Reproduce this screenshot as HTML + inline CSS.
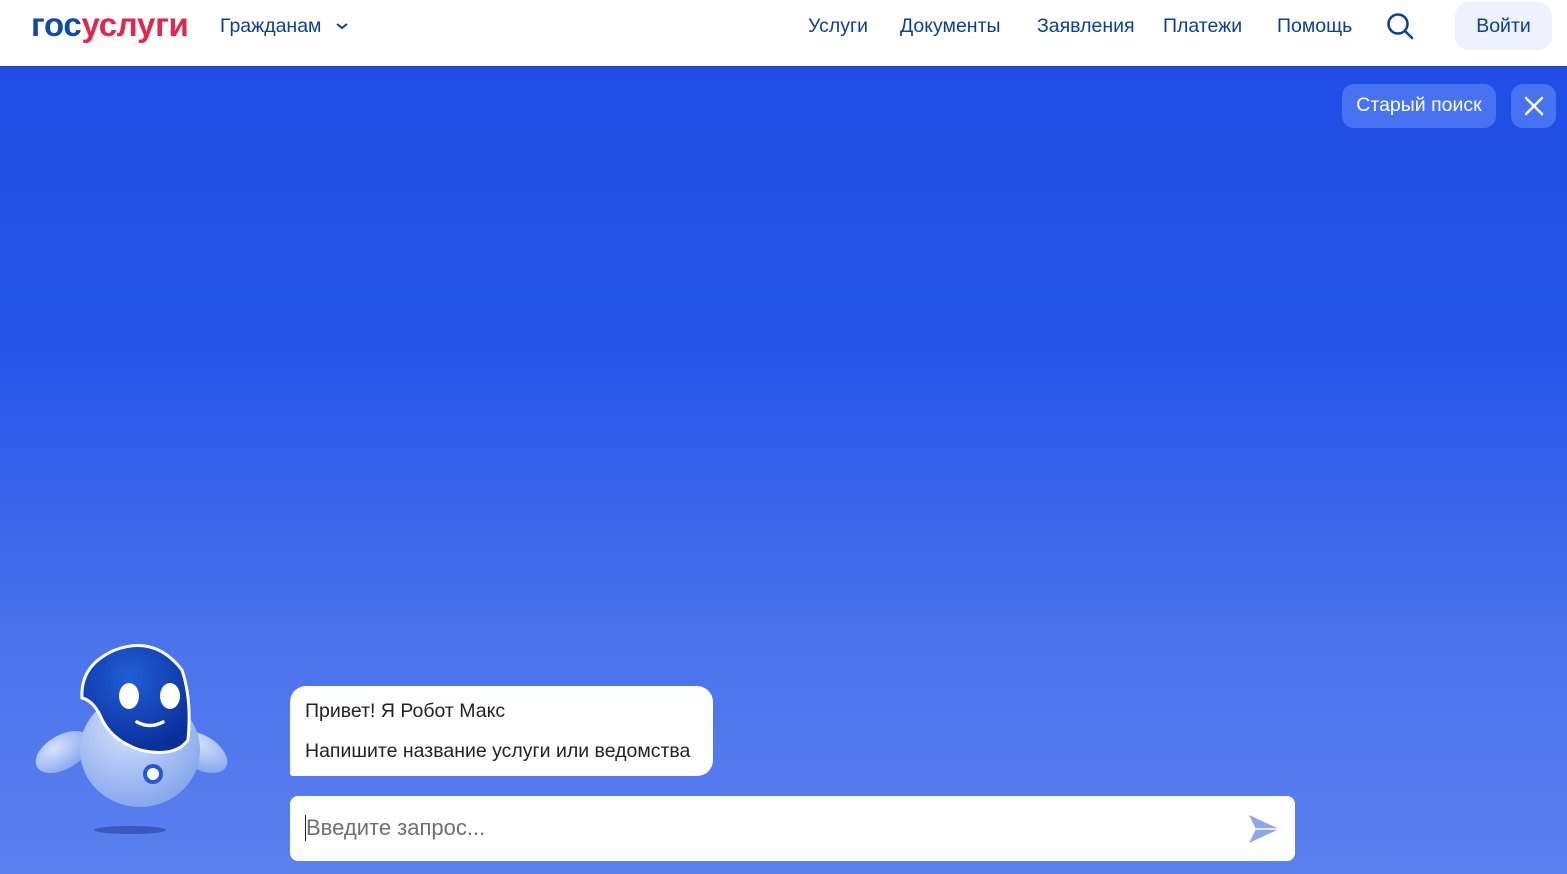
<!DOCTYPE html>
<html><head><meta charset="utf-8"><style>
*{margin:0;padding:0;box-sizing:border-box}
body{width:1567px;height:874px;overflow:hidden;font-family:"Liberation Sans","DejaVu Sans",sans-serif;background:#fff;position:relative}
.hdr{position:absolute;left:0;top:0;width:1567px;height:69px;background:#fff;border-bottom:3px solid #1d4bd6;z-index:2}
.logo{position:absolute;left:31px;top:6px;font-size:33px;font-weight:bold;letter-spacing:-0.3px}
.logo .a{color:#0e4aa8}.logo .b{color:#e3264a}
.nav{position:absolute;top:15px;font-size:19.5px;color:#0b3e9b}
.login{position:absolute;left:1455px;top:2px;width:97px;height:48px;background:#edf2fe;border-radius:14px;color:#0b3e9b;font-size:19.5px;text-align:center;line-height:48px}
.main{position:absolute;left:0;top:66px;width:1567px;height:808px;background:linear-gradient(180deg,#1f4de6 0%,#2655e8 35%,#4a72ec 70%,#5b80ef 100%)}
.old{position:absolute;left:1342px;top:84px;width:154px;height:44px;border-radius:12px;background:#4873f0;color:#fff;font-size:19.5px;text-align:center;line-height:43px}
.cls{position:absolute;left:1511px;top:84px;width:45px;height:44px;border-radius:12px;background:#4873f0}
.bub{position:absolute;left:290px;top:686px;width:423px;height:90px;background:#fff;border-radius:16px 16px 16px 3px;font-size:19.5px;color:#222;padding:14px 15px}
.inp{position:absolute;left:290px;top:796px;width:1005px;height:65px;background:#fff;border-radius:8px}
.ph{position:absolute;left:15px;top:19px;font-size:22px;color:#6b6f78;border-left:1px solid #222;line-height:26px}
</style></head><body>
<div class="hdr">
<div class="logo"><span class="a">гос</span><span class="b">услуги</span></div>
<div class="nav" style="left:220px">Гражданам</div>
<svg style="position:absolute;left:335px;top:21px" width="14" height="10"><path d="M2 3l5 4 5-4" stroke="#0b3e9b" stroke-width="2" fill="none"/></svg>
<div class="nav" style="left:808px">Услуги</div>
<div class="nav" style="left:900px">Документы</div>
<div class="nav" style="left:1037px">Заявления</div>
<div class="nav" style="left:1163px">Платежи</div>
<div class="nav" style="left:1277px">Помощь</div>
<svg style="position:absolute;left:1386px;top:12px" width="30" height="30"><circle cx="12" cy="12" r="9.5" stroke="#0b3e9b" stroke-width="2.5" fill="none"/><path d="M19 19l7 7" stroke="#0b3e9b" stroke-width="2.5" stroke-linecap="round"/></svg>
<div class="login">Войти</div>
</div>
<div class="main"></div>
<div class="old">Старый поиск</div>
<div class="cls"><svg width="45" height="44"><path d="M15 14l16 16M31 14L15 30" stroke="#fff" stroke-width="2.5" stroke-linecap="round"/></svg></div>
<svg style="position:absolute;left:30px;top:640px" width="210" height="205">
<defs><radialGradient id="h" cx="0.45" cy="0.3" r="0.7"><stop offset="0" stop-color="#1f5fd8"/><stop offset="1" stop-color="#0a2f9a"/></radialGradient>
<radialGradient id="b" cx="0.4" cy="0.3" r="0.8"><stop offset="0" stop-color="#d6e2fb"/><stop offset="1" stop-color="#7d9fec"/></radialGradient></defs>
<ellipse cx="100" cy="190" rx="36" ry="4" fill="#2a3f9a" opacity="0.6"/>
<ellipse cx="33" cy="112" rx="30" ry="17" transform="rotate(-30 33 112)" fill="url(#b)"/>
<ellipse cx="170" cy="112" rx="30" ry="17" transform="rotate(30 170 112)" fill="url(#b)"/>
<ellipse cx="110" cy="110" rx="60" ry="57" fill="url(#b)"/>
<path d="M52 58 Q50 25 85 10 Q125 -5 152 30 Q162 60 158 100 Q145 118 110 110 Q80 100 70 75 Q62 60 52 58Z" fill="url(#h)" stroke="#fff" stroke-width="3"/>
<ellipse cx="99" cy="56" rx="10" ry="13" fill="#fff"/>
<ellipse cx="140" cy="56" rx="10" ry="13" fill="#fff"/>
<path d="M107 82 Q120 89 133 82" stroke="#fff" stroke-width="3.5" fill="none" stroke-linecap="round"/>
<circle cx="123" cy="134" r="10" fill="#2356d8"/><circle cx="123" cy="134" r="6" fill="#fff"/>
</svg>
<div class="bub"><div>Привет! Я Робот Макс</div><div style="margin-top:17px">Напишите название услуги или ведомства</div></div>
<div class="inp"><div class="ph">Введите запрос...</div>
<svg style="position:absolute;left:958px;top:18px" width="32" height="30"><path d="M1 1L31 15 1 29 8 15Z" fill="#8fa6ea"/><path d="M8 15h23" stroke="#fff" stroke-width="1.5"/></svg></div>
</body></html>
